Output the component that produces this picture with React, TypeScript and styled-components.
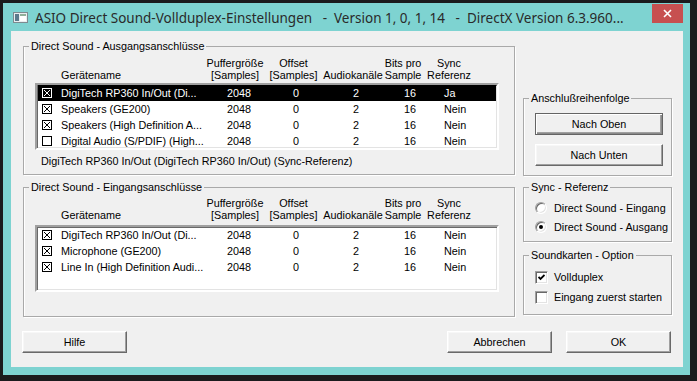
import styled, { createGlobalStyle } from "styled-components";

const GlobalStyle = createGlobalStyle`
  html, body {
    margin: 0;
    padding: 0;
    background: #1b1b1d;
  }
  body {
    width: 697px;
    height: 381px;
    overflow: hidden;
  }
`;

const Window = styled.div`
  margin: 3px 0 0 3px;
  width: 687px;
  height: 372px;
  box-sizing: border-box;
  background: #7ed3d1;
  padding: 0 7px 8px 8px;
  display: flex;
  flex-direction: column;
`;

const TitleBar = styled.div`
  height: 28px;
  display: flex;
  align-items: center;
  flex-shrink: 0;
`;

const TitleIcon = styled.svg`
  margin: 1px 7px 0 2px;
  flex-shrink: 0;
`;

const TitleText = styled.div`
  flex: 1;
  font-family: "Noto Sans", "Open Sans", sans-serif;
  font-size: 13.5px;
  color: #2a2a2a;
  white-space: pre;
  overflow: hidden;
  margin-top: 1px;
`;

const CloseButton = styled.div`
  align-self: flex-start;
  margin-top: 1px;
  width: 31px;
  height: 19px;
  background: #c75050;
  display: flex;
  align-items: center;
  justify-content: center;
  flex-shrink: 0;
`;

const Client = styled.div`
  flex: 1;
  background: #f0f0f0;
  font-family: "Liberation Sans", Arial, sans-serif;
  font-size: 10.8px;
  color: #000;
  display: flex;
  flex-direction: column;
  padding: 9px 11px 14px 12px;
  box-sizing: border-box;
`;

const MainRow = styled.div`
  display: flex;
  gap: 8px;
`;

const Column = styled.div<{ $width: number; $top?: number }>`
  width: ${(p) => p.$width}px;
  margin-top: ${(p) => p.$top ?? 0}px;
  display: flex;
  flex-direction: column;
`;

const Group = styled.fieldset<{ $height: number; $after?: number }>`
  margin: 0 0 ${(p) => p.$after ?? 0}px 0;
  padding: 0;
  min-width: 0;
  height: ${(p) => p.$height}px;
  box-sizing: border-box;
  border: 1px solid #a9a9a9;
  border-radius: 0;
  box-shadow: 1px 1px 0 #ffffff, inset 1px 0 0 #ffffff;
`;

const Legend = styled.legend`
  margin-left: 5px;
  padding: 0 2px;
  line-height: 13px;
`;

const GroupBody = styled.div<{ $pad: string }>`
  padding: ${(p) => p.$pad};
  display: flex;
  flex-direction: column;
`;

const HeaderGrid = styled.div<{ $top: number }>`
  margin-top: ${(p) => p.$top}px;
  display: grid;
  grid-template-columns: 171px 58px 59px 60px 40px 52px;
  align-items: end;
  line-height: 12px;
  white-space: nowrap;
`;

const HeaderCell = styled.div<{ $left?: boolean }>`
  text-align: ${(p) => (p.$left ? "left" : "center")};
  padding-left: ${(p) => (p.$left ? "26px" : "0")};
`;

const ListBox = styled.div<{ $top: number }>`
  margin-top: ${(p) => p.$top}px;
  width: 464px;
  height: 67px;
  box-sizing: border-box;
  background: #fff;
  border-style: solid;
  border-width: 2px;
  border-color: #a0a0a0 #ffffff #ffffff #a0a0a0;
  box-shadow: inset 1px 1px 0 #696969, inset -1px -1px 0 #e3e3e3;
  padding: 0 1px 0 1px;
  overflow: hidden;
`;

const Row = styled.div<{ $selected?: boolean }>`
  height: 16px;
  display: grid;
  grid-template-columns: 19px 166px 66px 60px 51px 40px 1fr;
  align-items: center;
  padding-left: 4px;
  white-space: nowrap;
  background: ${(p) => (p.$selected ? "#000" : "transparent")};
  color: ${(p) => (p.$selected ? "#fff" : "#000")};
`;

const StatusLine = styled.div`
  margin-top: 5px;
  padding-left: 6px;
  line-height: 12px;
  white-space: nowrap;
`;

const Button = styled.button<{ $width: number; $default?: boolean }>`
  width: ${(p) => p.$width}px;
  height: 22px;
  box-sizing: border-box;
  font-family: "Liberation Sans", Arial, sans-serif;
  font-size: 10.8px;
  color: #000;
  background: #f0f0f0;
  padding: 0;
  border-style: solid;
  border-width: 1px;
  border-color: ${(p) =>
    p.$default ? "#646464" : "#ffffff #696969 #696969 #ffffff"};
  box-shadow: ${(p) =>
    p.$default
      ? "inset 1px 1px 0 #ffffff, inset -1px -1px 0 #8a8a8a, inset -2px -2px 0 #a0a0a0"
      : "inset -1px -1px 0 #a0a0a0, inset 1px 1px 0 #f7f7f7"};
`;

const ButtonStack = styled.div`
  display: flex;
  flex-direction: column;
  gap: 9px;
  margin-top: 8px;
  padding-left: 11px;
`;

const OptionList = styled.div<{ $top: number; $row: number }>`
  margin-top: ${(p) => p.$top}px;
  padding-left: 11px;
  display: grid;
  grid-auto-rows: ${(p) => p.$row}px;
`;

const Option = styled.label<{ $gap: number }>`
  display: flex;
  align-items: center;
  gap: ${(p) => p.$gap}px;
  white-space: nowrap;
`;

const Radio = styled.span<{ $checked?: boolean }>`
  width: 12px;
  height: 12px;
  box-sizing: border-box;
  border-radius: 50%;
  border: 1px solid;
  border-color: #a0a0a0 #ffffff #ffffff #a0a0a0;
  background: #fff;
  box-shadow: inset 1px 1px 0 #696969, inset -1px -1px 0 #e3e3e3;
  display: flex;
  align-items: center;
  justify-content: center;

  &::after {
    content: "";
    width: 4px;
    height: 4px;
    border-radius: 50%;
    background: ${(p) => (p.$checked ? "#000" : "transparent")};
  }
`;

const CheckBox = styled.span`
  width: 13px;
  height: 13px;
  box-sizing: border-box;
  border: 1px solid;
  border-color: #a0a0a0 #ffffff #ffffff #a0a0a0;
  background: #fff;
  box-shadow: inset 1px 1px 0 #696969, inset -1px -1px 0 #e3e3e3;
  display: flex;
  align-items: center;
  justify-content: center;
`;

const BottomRow = styled.div`
  margin-top: 14px;
  display: flex;
  align-items: center;
  margin-left: -1px;
`;

const RightButtons = styled.div`
  margin-left: auto;
  display: flex;
  gap: 14px;
  margin-right: 1px;
`;

type Device = {
  name: string;
  on: boolean;
  sync: string;
};

const outputs: Device[] = [
  { name: "DigiTech RP360 In/Out (Di...", on: true, sync: "Ja" },
  { name: "Speakers (GE200)", on: true, sync: "Nein" },
  { name: "Speakers (High Definition A...", on: true, sync: "Nein" },
  { name: "Digital Audio (S/PDIF) (High...", on: false, sync: "Nein" },
];

const inputs: Device[] = [
  { name: "DigiTech RP360 In/Out (Di...", on: true, sync: "Nein" },
  { name: "Microphone (GE200)", on: true, sync: "Nein" },
  { name: "Line In (High Definition Audi...", on: true, sync: "Nein" },
];

const BoxMark = ({ on }: { on: boolean }) => (
  <svg width="10" height="10" viewBox="0 0 10 10">
    <rect x="0.5" y="0.5" width="9" height="9" fill="none" stroke="currentColor" />
    {on && (
      <path d="M2 2 L8 8 M8 2 L2 8" stroke="currentColor" strokeWidth="1" fill="none" />
    )}
  </svg>
);

const Header = ({ top }: { top: number }) => (
  <HeaderGrid $top={top}>
    <HeaderCell $left>Gerätename</HeaderCell>
    <HeaderCell>
      Puffergröße
      <br />
      [Samples]
    </HeaderCell>
    <HeaderCell>
      Offset
      <br />
      [Samples]
    </HeaderCell>
    <HeaderCell>Audiokanäle</HeaderCell>
    <HeaderCell>
      Bits pro
      <br />
      Sample
    </HeaderCell>
    <HeaderCell>
      Sync
      <br />
      Referenz
    </HeaderCell>
  </HeaderGrid>
);

const DeviceList = ({ items, top, selected }: { items: Device[]; top: number; selected?: number }) => (
  <ListBox $top={top}>
    {items.map((d, i) => (
      <Row key={i} $selected={i === selected}>
        <BoxMark on={d.on} />
        <span>{d.name}</span>
        <span>2048</span>
        <span>0</span>
        <span>2</span>
        <span>16</span>
        <span>{d.sync}</span>
      </Row>
    ))}
  </ListBox>
);

function App() {
  return (
    <>
      <GlobalStyle />
      <Window>
        <TitleBar>
          <TitleIcon width="15" height="11" viewBox="0 0 15 11">
            <rect x="0.5" y="0.5" width="14" height="10" fill="#e8eef0" stroke="#7d8a90" />
            <rect x="2" y="2" width="4" height="7" fill="#5b7a8c" />
            <rect x="7" y="2" width="6" height="7" fill="#ffffff" />
            <rect x="7" y="2" width="6" height="2" fill="#8fb09a" />
          </TitleIcon>
          <TitleText>
            {"ASIO Direct Sound-Vollduplex-Einstellungen   -  Version 1, 0, 1, 14   -  DirectX Version 6.3.960..."}
          </TitleText>
          <CloseButton>
            <svg width="9" height="9" viewBox="0 0 9 9">
              <path d="M1 1 L8 8 M8 1 L1 8" stroke="#fff" strokeWidth="1.6" />
            </svg>
          </CloseButton>
        </TitleBar>
        <Client>
          <MainRow>
            <Column $width={492}>
              <Group $height={135} $after={6}>
                <Legend>Direct Sound - Ausgangsanschlüsse</Legend>
                <GroupBody $pad="0 0 0 11px">
                  <Header top={4} />
                  <DeviceList items={outputs} top={2} selected={0} />
                  <StatusLine>DigiTech RP360 In/Out (DigiTech RP360 In/Out) (Sync-Referenz)</StatusLine>
                </GroupBody>
              </Group>
              <Group $height={136}>
                <Legend>Direct Sound - Eingangsanschlüsse</Legend>
                <GroupBody $pad="0 0 0 11px">
                  <Header top={3} />
                  <DeviceList items={inputs} top={4} />
                </GroupBody>
              </Group>
            </Column>
            <Column $width={149} $top={52}>
              <Group $height={84} $after={5}>
                <Legend>Anschlußreihenfolge</Legend>
                <ButtonStack>
                  <Button $width={128} $default>Nach Oben</Button>
                  <Button $width={128}>Nach Unten</Button>
                </ButtonStack>
              </Group>
              <Group $height={61} $after={7}>
                <Legend>Sync - Referenz</Legend>
                <OptionList $top={4} $row={19}>
                  <Option $gap={7}>
                    <Radio />
                    Direct Sound - Eingang
                  </Option>
                  <Option $gap={7}>
                    <Radio $checked />
                    Direct Sound - Ausgang
                  </Option>
                </OptionList>
              </Group>
              <Group $height={66}>
                <Legend>Soundkarten - Option</Legend>
                <OptionList $top={5} $row={20}>
                  <Option $gap={6}>
                    <CheckBox>
                      <svg width="7" height="7" viewBox="0 0 7 7">
                        <path d="M0.5 3 L2.5 5 L6.5 1" stroke="#000" strokeWidth="1.8" fill="none" />
                      </svg>
                    </CheckBox>
                    Vollduplex
                  </Option>
                  <Option $gap={6}>
                    <CheckBox />
                    Eingang zuerst starten
                  </Option>
                </OptionList>
              </Group>
            </Column>
          </MainRow>
          <BottomRow>
            <Button $width={105}>Hilfe</Button>
            <RightButtons>
              <Button $width={105}>Abbrechen</Button>
              <Button $width={105}>OK</Button>
            </RightButtons>
          </BottomRow>
        </Client>
      </Window>
    </>
  );
}

export default App;
